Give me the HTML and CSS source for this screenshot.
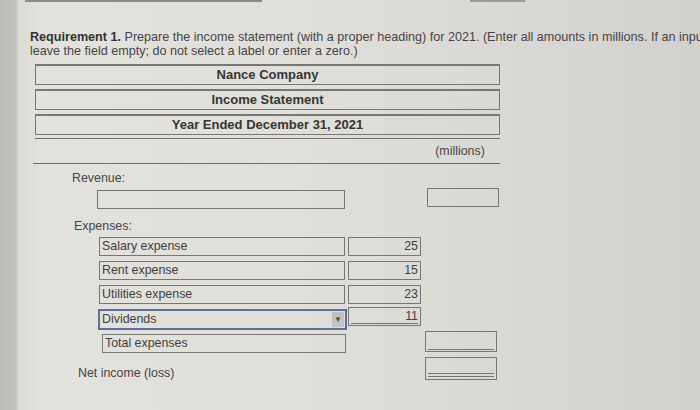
FILE: index.html
```html
<!DOCTYPE html>
<html>
<head>
<meta charset="utf-8">
<link rel="stylesheet" href="styles.css">
</head>
<body>
<div class="page">
  <div class="topstrip">
    <div class="topline"></div>
    <div class="topbox"></div>
  </div>
  <p class="req">
    <span class="line"><b>Requirement 1.</b> Prepare the income statement (with a proper heading) for 2021. (Enter all amounts in millions. If an input field is not used in the table</span>
    <span class="line">leave the field empty; do not select a label or enter a zero.)</span>
  </p>
  <div class="statement">
    <div class="hbox">Nance Company</div>
    <div class="hbox">Income Statement</div>
    <div class="hbox">Year Ended December 31, 2021</div>
    <div class="rule"></div>
    <div class="units">
      <span class="units-text">(millions)</span>
    </div>

    <div class="label lbl-revenue">Revenue:</div>
    <div class="row row-revenue">
      <div class="lbox"></div>
      <div class="amt2"></div>
    </div>

    <div class="label lbl-expenses">Expenses:</div>
    <div class="row">
      <div class="lbox">Salary expense</div>
      <div class="amt1">25</div>
    </div>
    <div class="row">
      <div class="lbox">Rent expense</div>
      <div class="amt1">15</div>
    </div>
    <div class="row">
      <div class="lbox">Utilities expense</div>
      <div class="amt1">23</div>
    </div>
    <div class="row row-div">
      <div class="lbox select"><span>Dividends</span><span class="arrow">&#9660;</span></div>
      <div class="amt1 under">11</div>
    </div>
    <div class="row row-total">
      <div class="lbox total">Total expenses</div>
      <div class="amt2 under"></div>
    </div>
    <div class="row row-net">
      <div class="netlabel">Net income (loss)</div>
      <div class="amt2 dunder"></div>
    </div>
  </div>
</div>
</body>
</html>
```

FILE: styles.css
```css
html, body {
  margin: 0;
  padding: 0;
  width: 700px;
  height: 410px;
  overflow: hidden;
}
body {
  font-family: "Liberation Sans", Arial, sans-serif;
  color: #3c3c3c;
  background:
    linear-gradient(to right, #bdbcb8 0, #c3c2be 16px, #dcdad5 19px, #e4e2dd 40px, #e1dfda 300px, #dad8d4 520px, #d3d1cd 700px);
}
.page {
  padding-left: 30px;
}
.topstrip {
  display: flex;
  height: 2px;
}
.topline {
  margin-left: -5px;
  width: 237px;
  height: 2px;
  background: #8a8a88;
}
.topbox {
  margin-left: 208px;
  width: 55px;
  height: 2px;
  background: #9a9a98;
}
.req {
  margin: 28px 0 0 0;
  font-size: 12.6px;
  line-height: 14px;
  color: #454545;
}
.req b {
  color: #333;
}
.line {
  display: block;
  white-space: nowrap;
  width: 670px;
  overflow: hidden;
}
.statement {
  margin-left: 5px;
  margin-top: 6px;
  width: 465px;
  font-size: 12.4px;
}
.hbox {
  height: 18px;
  border: 1px solid #777775;
  border-top-width: 2px;
  text-align: center;
  font-weight: bold;
  font-size: 13px;
  line-height: 18px;
  color: #353535;
  margin-bottom: 4px;
}
.hbox:nth-of-type(3) {
  margin-bottom: 3px;
}
.rule {
  height: 1px;
  background: #70706e;
}
.units {
  height: 24px;
  border-bottom: 1px solid #6a6a68;
  margin-left: -2px;
  display: grid;
  grid-template-columns: 391px 72px;
}
.units-text {
  grid-column: 2;
  text-align: center;
  line-height: 24px;
  color: #444;
}
.label {
  height: 14px;
  line-height: 14px;
  color: #444;
}
.lbl-revenue {
  margin-top: 7px;
  padding-left: 37px;
}
.lbl-expenses {
  margin-top: 10px;
  padding-left: 39px;
}
.row {
  display: grid;
  grid-template-columns: 64px 246px 76px 77px;
  align-items: start;
  margin-top: 5px;
}
.row-revenue {
  margin-top: 3px;
}
.lbl-expenses + .row {
  margin-top: 4px;
}
.lbox {
  grid-column: 2;
  height: 17px;
  border: 1px solid #767674;
  line-height: 17px;
  padding-left: 2px;
  color: #3e3e3e;
}
.row-revenue .lbox {
  margin-top: 2px;
  margin-left: -2px;
}
.amt1 {
  grid-column: 3;
  justify-self: end;
  width: 69px;
  height: 17px;
  border: 1px solid #767674;
  text-align: right;
  padding-right: 2px;
  line-height: 17px;
  color: #3e3e3e;
}
.amt2 {
  grid-column: 4;
  justify-self: end;
  width: 70px;
  height: 17px;
  border: 1px solid #767674;
  margin-right: -1px;
}
.row-div {
  margin-top: 3px;
}
.select {
  margin-top: 2px;
  height: 17px;
  border: 2px solid #5f6e9e;
  display: flex;
  justify-content: space-between;
  align-items: center;
  padding-left: 2px;
  width: 243px;
  margin-left: -1px;
}
.arrow {
  width: 12px;
  height: 15px;
  margin-right: 1px;
  background: #c3c2c0;
  color: #4a4a4a;
  font-size: 8px;
  line-height: 15px;
  text-align: center;
}
.under {
  background: linear-gradient(#767674, #767674) no-repeat 2px calc(100% - 1px) / calc(100% - 4px) 1px;
}
.row-total {
  margin-top: 1px;
}
.total {
  margin-top: 3px;
  margin-left: 3px;
  width: 240px;
}
.row-total .amt2 {
  height: 19px;
  margin-right: 1px;
}
.row-net {
  margin-top: 4px;
}
.netlabel {
  grid-column: 1 / 3;
  padding-left: 43px;
  margin-top: 9px;
  line-height: 14px;
  color: #444;
}
.row-net .amt2 {
  height: 21px;
  margin-right: 1px;
}
.dunder {
  background:
    linear-gradient(#767674, #767674) no-repeat 2px calc(100% - 5px) / calc(100% - 4px) 1px,
    linear-gradient(#767674, #767674) no-repeat 2px calc(100% - 2px) / calc(100% - 4px) 1px;
}
```
